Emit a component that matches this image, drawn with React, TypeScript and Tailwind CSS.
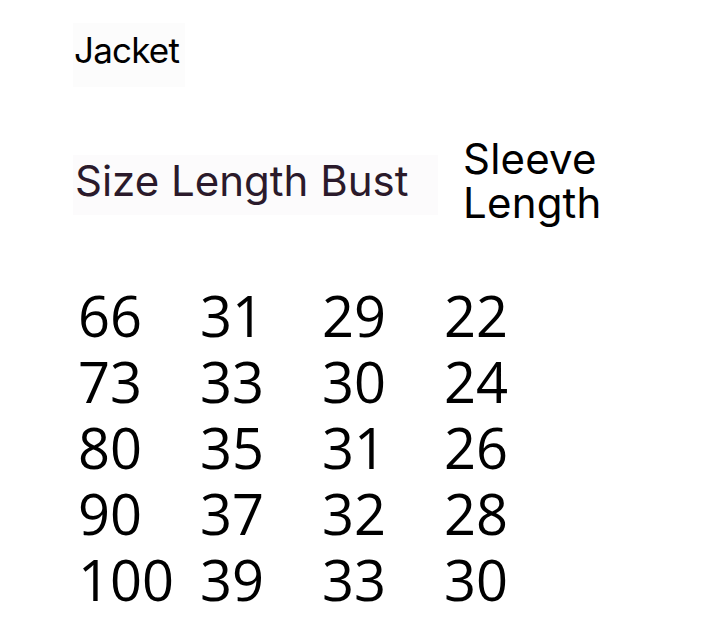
const rows = [
  ['66', '31', '29', '22'],
  ['73', '33', '30', '24'],
  ['80', '35', '31', '26'],
  ['90', '37', '32', '28'],
  ['100', '39', '33', '30'],
];

export default function App() {
  return (
    <div className="w-[708px] h-[621px] bg-white overflow-hidden">
      <div className="pl-[73px] pt-[23px]">
        <div className="w-[112px] h-[64px] bg-[#fcfcfc] pl-[1px] pt-[5px] text-[35px] leading-[44px] tracking-[-0.8px] text-black font-['Inter',sans-serif]">
          Jacket
        </div>
      </div>

      <div className="flex items-start pl-[73px] mt-[50px]">
        <div className="w-[365px] h-[60px] mt-[18px] bg-[#fcfbfc] pl-[2px] pt-[1px] text-[42px] leading-[50px] text-[#2b1a2b] font-['Inter',sans-serif] whitespace-nowrap">
          Size Length Bust
        </div>
        <div className="ml-[25px] text-[42px] leading-[44px] tracking-[0.2px] text-black font-['Inter',sans-serif]">
          Sleeve
          <br />
          Length
        </div>
      </div>

      <div className="pl-[78px] mt-[57px] grid grid-cols-[122px_122px_122px_122px] text-[56px] leading-[66px] text-black font-['Open_Sans',sans-serif]">
        {rows.map((r, i) =>
          r.map((v, j) => (
            <div key={i + '-' + j}>{v}</div>
          ))
        )}
      </div>
    </div>
  );
}
